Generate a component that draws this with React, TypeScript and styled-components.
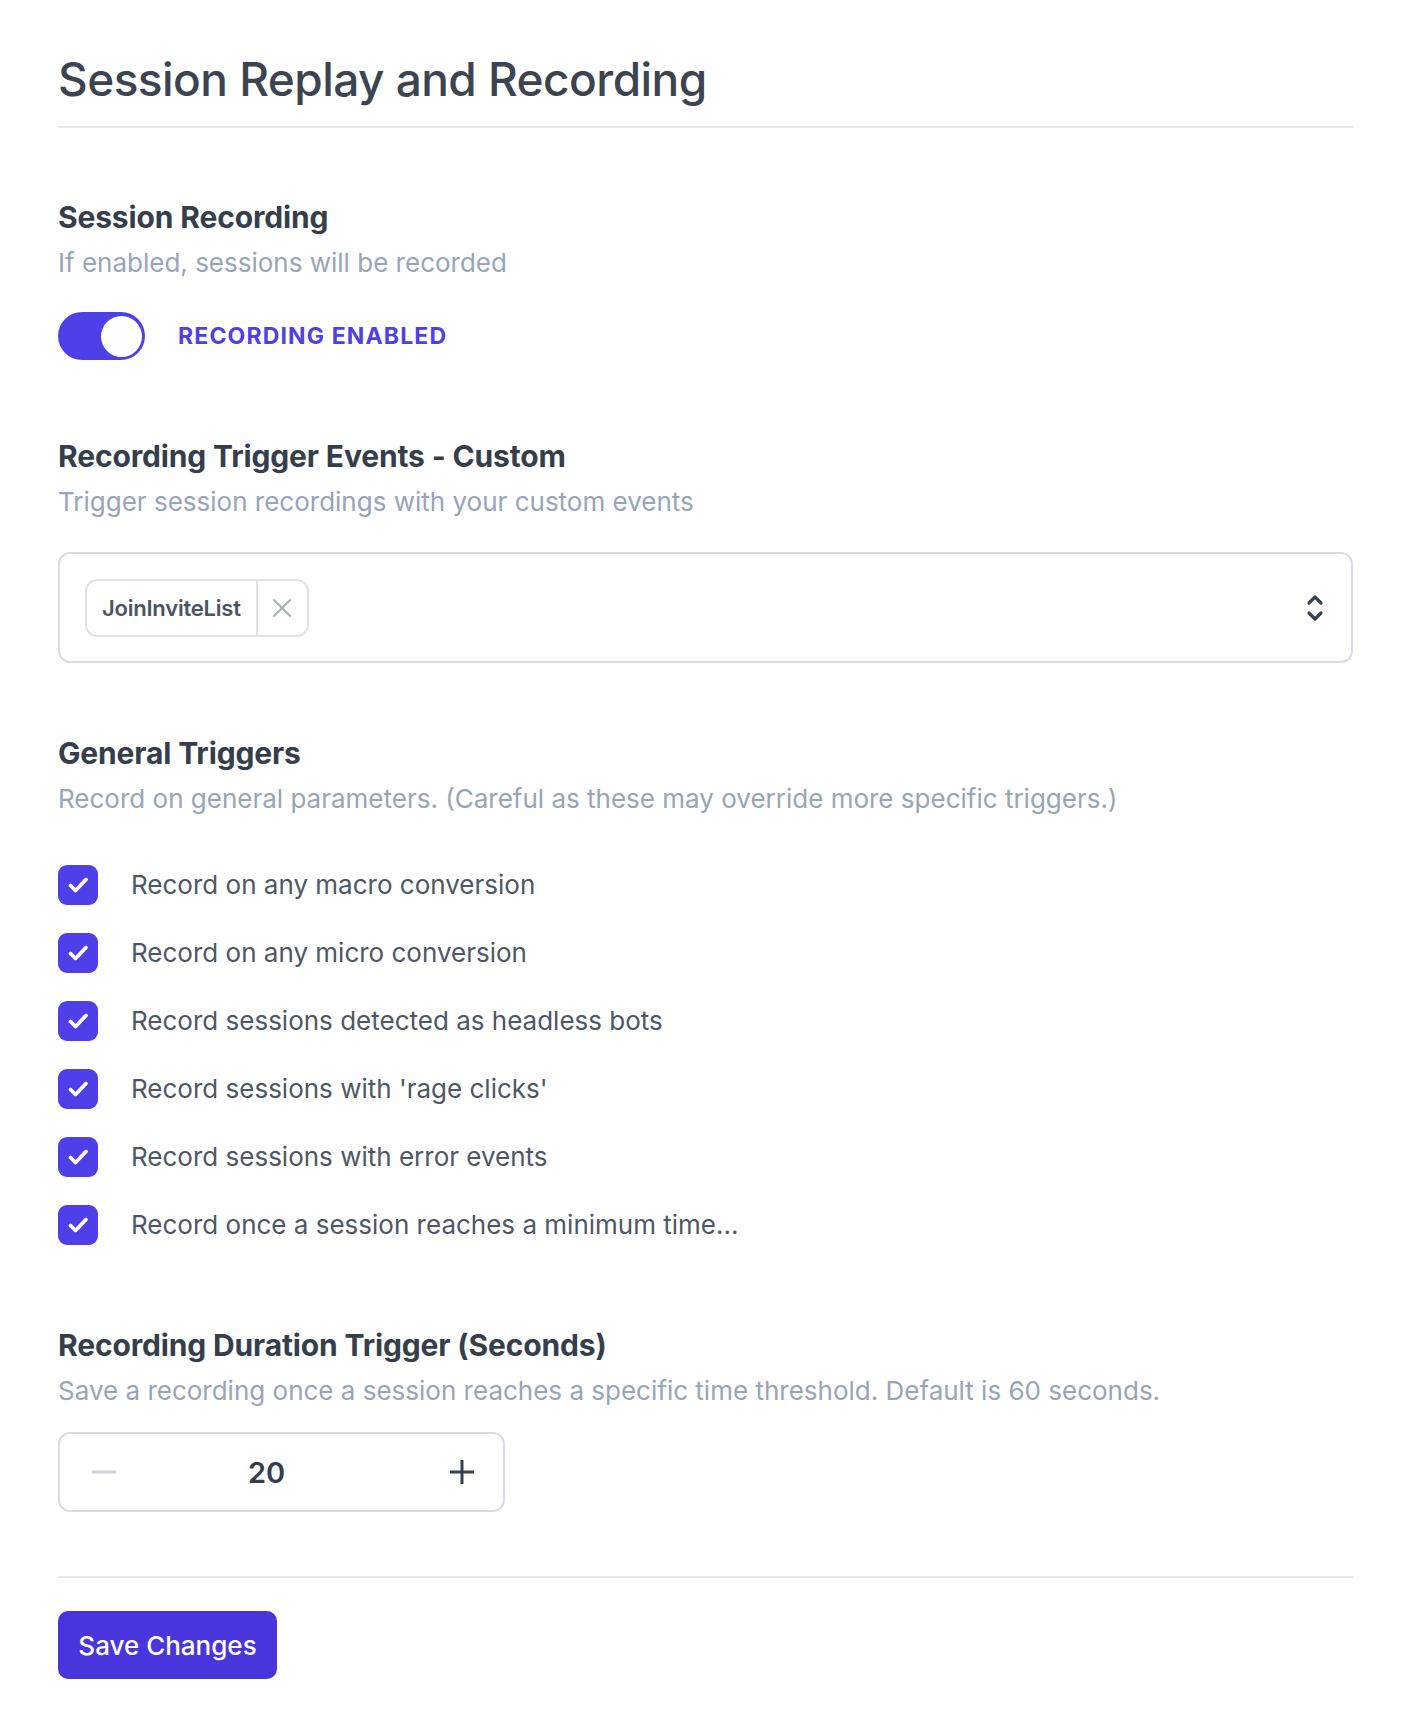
import styled, { createGlobalStyle } from "styled-components";
import { useState } from "react";

const GlobalStyle = createGlobalStyle`
  body {
    margin: 0;
    background: #ffffff;
    font-family: Inter, "Noto Sans", Arial, sans-serif;
    -webkit-font-smoothing: antialiased;
  }
  * {
    box-sizing: border-box;
  }
`;

const triggers = [
  "Record on any macro conversion",
  "Record on any micro conversion",
  "Record sessions detected as headless bots",
  "Record sessions with 'rage clicks'",
  "Record sessions with error events",
  "Record once a session reaches a minimum time...",
];

export default function App() {
  const [enabled, setEnabled] = useState(true);
  const [checked, setChecked] = useState(triggers.map(() => true));
  const [seconds, setSeconds] = useState(20);

  return (
    <Page>
      <GlobalStyle />
      <PageTitle>Session Replay and Recording</PageTitle>
      <Divider $top={19} />

      <Section $gap={71}>
        <SectionTitle>Session Recording</SectionTitle>
        <SectionText>If enabled, sessions will be recorded</SectionText>
        <ToggleRow>
          <Toggle $on={enabled} onClick={() => setEnabled(!enabled)}>
            <Knob />
          </Toggle>
          <ToggleLabel>{enabled ? "Recording Enabled" : "Recording Disabled"}</ToggleLabel>
        </ToggleRow>
      </Section>

      <Section $gap={78}>
        <SectionTitle>Recording Trigger Events - Custom</SectionTitle>
        <SectionText>Trigger session recordings with your custom events</SectionText>
        <SelectBox>
          <Chip>
            <ChipText>JoinInviteList</ChipText>
            <ChipRemove>
              <svg width="22" height="22" viewBox="0 0 22 22" fill="none">
                <path d="M3 3l16 16M19 3L3 19" stroke="#a3acb9" strokeWidth="1.9" strokeLinecap="round" />
              </svg>
            </ChipRemove>
          </Chip>
          <svg width="20" height="30" viewBox="0 0 20 30" fill="none">
            <path d="M4 10l6-6 6 6M4 20l6 6 6-6" stroke="#374151" strokeWidth="3.2" strokeLinecap="round" strokeLinejoin="round" />
          </svg>
        </SelectBox>
      </Section>

      <Section $gap={72}>
        <SectionTitle>General Triggers</SectionTitle>
        <SectionText>Record on general parameters. (Careful as these may override more specific triggers.)</SectionText>
        <CheckList>
          {triggers.map((label, i) => (
            <CheckRow
              key={label}
              onClick={() => setChecked(checked.map((c, j) => (j === i ? !c : c)))}>
              <CheckBox $on={checked[i]}>
                {checked[i] && (
                  <svg width="28" height="28" viewBox="0 0 28 28" fill="none">
                    <path d="M6.5 14.5l5 5L22 8.5" stroke="#fff" strokeWidth="3.8" strokeLinecap="round" strokeLinejoin="round" />
                  </svg>
                )}
              </CheckBox>
              <CheckLabel>{label}</CheckLabel>
            </CheckRow>
          ))}
        </CheckList>
      </Section>

      <Section $gap={82}>
        <SectionTitle>Recording Duration Trigger (Seconds)</SectionTitle>
        <SectionText>Save a recording once a session reaches a specific time threshold. Default is 60 seconds.</SectionText>
        <Stepper>
          <StepButton onClick={() => setSeconds(Math.max(0, seconds - 1))}>
            <svg width="26" height="26" viewBox="0 0 26 26" fill="none">
              <path d="M1 13h24" stroke="#cbd2db" strokeWidth="3" />
            </svg>
          </StepButton>
          <StepValue>{seconds}</StepValue>
          <StepButton onClick={() => setSeconds(seconds + 1)}>
            <svg width="26" height="26" viewBox="0 0 26 26" fill="none">
              <path d="M1 13h24M13 1v24" stroke="#374151" strokeWidth="3" />
            </svg>
          </StepButton>
        </Stepper>
      </Section>

      <Divider $top={64} />
      <SaveButton>Save Changes</SaveButton>
    </Page>
  );
}

const Page = styled.main`
  padding: 51px 53px 46px 58px;
`;

const PageTitle = styled.h1`
  margin: 0;
  font-size: 46px;
  line-height: 56px;
  font-weight: 500;
  color: #3b4450;
  letter-spacing: -0.012em;
`;

const Divider = styled.hr<{ $top: number }>`
  margin: ${(p) => p.$top}px 0 0;
  border: none;
  border-top: 2px solid #e6e8eb;
`;

const Section = styled.section<{ $gap: number }>`
  margin-top: ${(p) => p.$gap}px;
`;

const SectionTitle = styled.h2`
  margin: 0;
  font-size: 30px;
  line-height: 36px;
  font-weight: 700;
  color: #353e4b;
  letter-spacing: -0.005em;
`;

const SectionText = styled.p`
  margin: 12px 0 0;
  font-size: 26px;
  line-height: 32px;
  color: #96a5b9;
`;

const ToggleRow = styled.div`
  display: flex;
  align-items: center;
  gap: 33px;
  margin-top: 33px;
`;

const Toggle = styled.button<{ $on: boolean }>`
  display: flex;
  justify-content: ${(p) => (p.$on ? "flex-end" : "flex-start")};
  align-items: center;
  width: 87px;
  height: 48px;
  padding: 0 3.5px;
  border: none;
  border-radius: 999px;
  background: ${(p) => (p.$on ? "#4f3fe8" : "#cbd5e1")};
  cursor: pointer;
`;

const Knob = styled.span`
  width: 41px;
  height: 41px;
  border-radius: 50%;
  background: #ffffff;
`;

const ToggleLabel = styled.span`
  font-size: 23px;
  font-weight: 700;
  text-transform: uppercase;
  letter-spacing: 0.05em;
  color: #4f3fe8;
`;

const SelectBox = styled.div`
  display: flex;
  align-items: center;
  justify-content: space-between;
  height: 111px;
  margin-top: 34px;
  padding: 0 26px 0 25px;
  border: 2px solid #d8dee6;
  border-radius: 12px;
`;

const Chip = styled.div`
  display: flex;
  height: 58px;
  border: 2px solid #dde2e8;
  border-radius: 12px;
`;

const ChipText = styled.span`
  display: flex;
  align-items: center;
  padding: 0 15px;
  font-size: 22px;
  font-weight: 600;
  color: #4a5563;
  letter-spacing: -0.01em;
`;

const ChipRemove = styled.span`
  display: flex;
  align-items: center;
  justify-content: center;
  width: 51px;
  border-left: 2px solid #dde2e8;
`;

const CheckList = styled.div`
  display: flex;
  flex-direction: column;
  gap: 28px;
  margin-top: 50px;
`;

const CheckRow = styled.label`
  display: flex;
  align-items: center;
  gap: 33px;
  cursor: pointer;
`;

const CheckBox = styled.span<{ $on: boolean }>`
  display: flex;
  align-items: center;
  justify-content: center;
  width: 40px;
  height: 40px;
  border-radius: 9px;
  background: ${(p) => (p.$on ? "#4f3fe8" : "#ffffff")};
  border: ${(p) => (p.$on ? "none" : "2px solid #cbd5e1")};
`;

const CheckLabel = styled.span`
  font-size: 26px;
  line-height: 32px;
  color: #4d5866;
`;

const Stepper = styled.div`
  display: grid;
  grid-template-columns: 88px 1fr 82px;
  align-items: center;
  width: 447px;
  height: 80px;
  margin-top: 25px;
  border: 2px solid #d8dee6;
  border-radius: 12px;
`;

const StepButton = styled.button`
  display: flex;
  align-items: center;
  justify-content: center;
  height: 100%;
  padding: 0;
  border: none;
  background: none;
  cursor: pointer;
`;

const StepValue = styled.span`
  padding-right: 36px;
  text-align: center;
  font-size: 29px;
  font-weight: 600;
  color: #343d4a;
`;

const SaveButton = styled.button`
  display: block;
  width: 219px;
  height: 68px;
  margin-top: 33px;
  border: none;
  border-radius: 10px;
  background: #4836dc;
  color: #ffffff;
  font-family: inherit;
  font-size: 26px;
  font-weight: 500;
  cursor: pointer;
`;
